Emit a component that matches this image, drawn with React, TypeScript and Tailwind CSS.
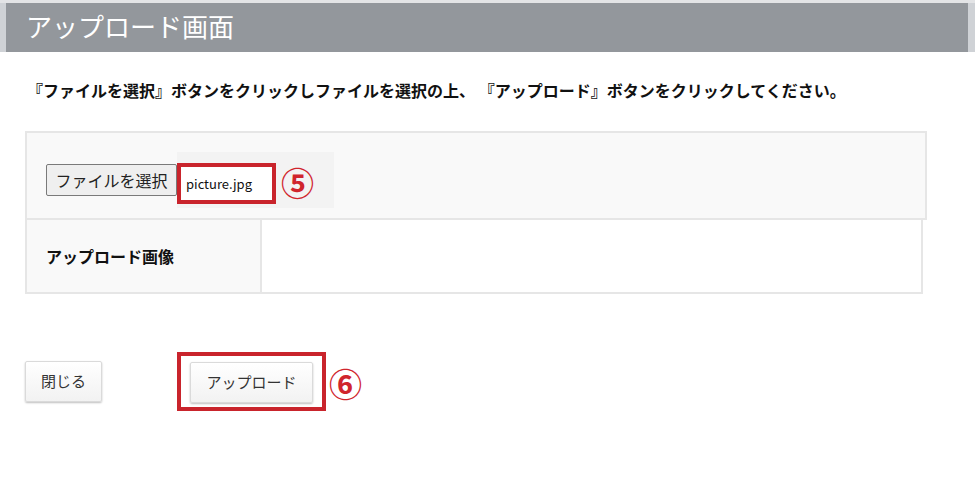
import React from "react";

const font = { fontFamily: '"Noto Sans CJK JP", "Noto Sans", sans-serif' };

export default function App() {
  return (
    <div className="w-[975px] h-[478px] bg-white text-black overflow-hidden" style={font}>
      <div className="border-t-[3px] border-[#e3e4e6] bg-[#cfd2d6] pl-[6px] pr-[7px]">
        <div className="h-[49px] bg-[#93979c] pl-[20px] pb-[4px] flex items-center text-white text-[26px] leading-none">
          アップロード画面
        </div>
      </div>
      <div className="px-[25px]">
        <p className="mt-[26px] pl-[2px] h-[24px] text-[16px] leading-[24px] font-bold text-[#111] whitespace-nowrap">
          『ファイルを選択』ボタンをクリックしファイルを選択の上、 『アップロード』ボタンをクリックしてください。
        </p>
        <div className="mt-[29px]">
          <div className="w-[902px] h-[89px] border-2 border-[#e6e6e6] bg-[#f9f9f9] pl-[19px] pt-[19px] flex items-start">
            <div className="mt-[12px] w-[131px] h-[32px] border border-[#7a7a7a] rounded-[2px] bg-[#efefef] flex items-center justify-center text-[16px] text-[#222] leading-none">
              ファイルを選択
            </div>
            <div className="h-[56px] bg-[#f3f3f3] pr-[20px] flex items-center">
              <div className="mt-[6px] w-[99px] h-[41px] border-4 border-[#c9242c] bg-white flex items-center pl-[5px] text-[13px] text-[#111] leading-none">
                picture.jpg
              </div>
              <span className="ml-[5px] mt-[4px] text-[33px] font-bold leading-none text-[#d0252d]">⑤</span>
            </div>
          </div>
          <div className="w-[898px] h-[74px] border-x-2 border-b-2 border-[#e6e6e6] flex">
            <div className="w-[235px] h-full bg-[#f9f9f9] border-r-2 border-[#e6e6e6] pl-[19px] flex items-center text-[16px] font-bold text-[#111]">
              アップロード画像
            </div>
            <div className="flex-1 bg-white" />
          </div>
        </div>
        <div className="mt-[58px] flex items-center">
          <div className="w-[77px] h-[41px] border border-[#dadada] rounded-[2px] bg-gradient-to-b from-white to-[#f2f2f2] shadow-[0_1px_2px_rgba(0,0,0,0.25)] flex items-center justify-center text-[15px] text-[#333]">
            閉じる
          </div>
          <div className="ml-[75px] w-[149px] h-[59px] border-4 border-[#c9242c] pl-[9px] pt-[6px]">
            <div className="w-[123px] h-[41px] border border-[#dadada] rounded-[2px] bg-gradient-to-b from-white to-[#f2f2f2] shadow-[0_1px_2px_rgba(0,0,0,0.25)] flex items-center justify-center text-[15px] text-[#333]">
              アップロード
            </div>
          </div>
          <span className="ml-[3px] mt-[4px] text-[33px] font-bold leading-none text-[#d0252d]">⑥</span>
        </div>
      </div>
    </div>
  );
}
